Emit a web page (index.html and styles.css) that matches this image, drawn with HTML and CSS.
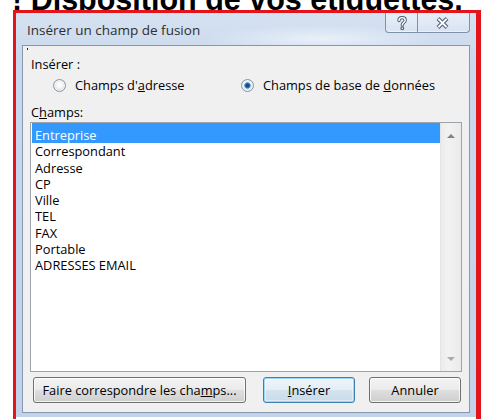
FILE: index.html
```html
<!DOCTYPE html>
<html lang="fr">
<head>
<meta charset="utf-8">
<title>Insérer un champ de fusion</title>
<link rel="stylesheet" href="styles.css">
</head>
<body>
<h1 class="page-title"><span class="page-title-text">! Disposition de vos étiquettes.</span></h1>
<div class="highlight-frame">
  <div class="window">
    <div class="titlebar">
      <span class="caption">Insérer un champ de fusion</span>
      <div class="caption-buttons">
        <span class="cap-btn cap-help">
          <svg width="10" height="15" viewBox="0 0 10 15">
            <g fill="none" stroke-linecap="round">
              <path d="M2 4.6 C2 2.6 3.4 1.6 5.1 1.6 C7 1.6 8.2 2.7 8.2 4.3 C8.2 6.4 5.3 6.6 5.3 9" stroke="#56667c" stroke-width="3.4"/>
              <circle cx="5.3" cy="12.3" r="1.3" fill="#56667c" stroke="#56667c" stroke-width="1.4"/>
              <path d="M2 4.6 C2 2.6 3.4 1.6 5.1 1.6 C7 1.6 8.2 2.7 8.2 4.3 C8.2 6.4 5.3 6.6 5.3 9" stroke="#fff" stroke-width="1.4"/>
              <circle cx="5.3" cy="12.3" r="0.8" fill="#fff"/>
            </g>
          </svg>
        </span>
        <span class="cap-btn cap-close">
          <svg width="13" height="12" viewBox="0 0 13 12">
            <path d="M2 1.5 L11 10.5 M11 1.5 L2 10.5" fill="none" stroke="#56667c" stroke-width="4"/>
            <path d="M2.4 1.9 L10.6 10.1 M10.6 1.9 L2.4 10.1" fill="none" stroke="#fff" stroke-width="2"/>
          </svg>
        </span>
      </div>
    </div>
    <div class="client">
      <span class="stray-dot"></span>
      <div class="label">Insérer :</div>
      <div class="radio-row">
        <label class="radio radio-first"><span class="radio-mark"></span><span class="radio-text">Champs d'<u>a</u>dresse</span></label>
        <label class="radio"><span class="radio-mark checked"></span><span class="radio-text">Champs de base de <u>d</u>onnées</span></label>
      </div>
      <div class="label fields-label">C<u>h</u>amps:</div>
      <div class="listbox">
        <ul class="items">
          <li class="item selected">Entreprise</li>
          <li class="item">Correspondant</li>
          <li class="item">Adresse</li>
          <li class="item">CP</li>
          <li class="item">Ville</li>
          <li class="item">TEL</li>
          <li class="item">FAX</li>
          <li class="item">Portable</li>
          <li class="item">ADRESSES EMAIL</li>
        </ul>
        <div class="scrollbar">
          <span class="arrow arrow-up"></span>
          <span class="arrow arrow-down"></span>
        </div>
      </div>
      <div class="button-row">
        <button class="btn btn-map">Faire correspondre les cha<u>m</u>ps...</button>
        <button class="btn btn-insert btn-default"><u>I</u>nsérer</button>
        <button class="btn btn-cancel">Annuler</button>
      </div>
    </div>
  </div>
</div>
</body>
</html>
```
FILE: styles.css
```css
* {
  box-sizing: border-box;
}

html,
body {
  margin: 0;
  padding: 0;
  background: #fff;
}

body {
  width: 481px;
  height: 419px;
  overflow: hidden;
  font-family: "Open Sans", "Noto Sans", sans-serif;
}

/* Page heading, mostly hidden behind the dialog */
.page-title {
  margin: 0;
  height: 10px;
  overflow: hidden;
  font: bold 30.5px/35px "Liberation Sans", Arial, sans-serif;
  color: #000;
  white-space: nowrap;
}

.page-title-text {
  display: block;
  margin-top: -18px;
  padding-left: 12px;
}

/* Red outline drawn around the dialog */
.highlight-frame {
  margin-left: 13px;
  width: 468px;
  height: 409px;
  border: 3px solid #e3141c;
  border-right-width: 5px;
  border-bottom: 0;
}

/* Aero-style dialog window */
.window {
  height: 404px;
  display: flex;
  flex-direction: column;
  padding: 0 6px 4px 6px;
  background: linear-gradient(to bottom, #d6e2f1 0%, #c9d8ed 12%, #c2d2ea 100%);
}

.titlebar {
  height: 32px;
  flex: none;
  display: flex;
  align-items: flex-start;
  background: radial-gradient(ellipse 120px 14px at 300px 26px, rgba(235, 242, 250, 0.9), rgba(235, 242, 250, 0) 100%);
}

.caption {
  margin-top: 9px;
  padding-left: 5px;
  font-size: 13.5px;
  line-height: 16px;
  color: #2e2e2e;
  white-space: nowrap;
}

.caption-buttons {
  margin-left: auto;
  display: flex;
  height: 20px;
  border: 1px solid #7f90a8;
  border-top: 0;
  border-radius: 0 0 4px 4px;
  background: linear-gradient(to bottom, rgba(255, 255, 255, 0.45), rgba(255, 255, 255, 0.15));
  box-shadow: inset 0 -1px 0 rgba(255, 255, 255, 0.5);
}

.cap-btn {
  display: flex;
  align-items: center;
  justify-content: center;
  height: 100%;
}

.cap-help {
  width: 32px;
  border-right: 1px solid #7f90a8;
  padding-top: 1px;
}

.cap-close {
  width: 51px;
  padding-right: 2px;
}

/* Client area */
.client {
  position: relative;
  height: 368px;
  flex: none;
  display: flex;
  flex-direction: column;
  border: 1px solid #8797ae;
  background: #f0f0f0;
  padding: 10px 7px 0 7px;
  font-size: 12.8px;
  color: #000;
}

.stray-dot {
  position: absolute;
  left: 4px;
  top: 2px;
  width: 1px;
  height: 2px;
  background: #222;
}

.label {
  line-height: 16px;
  height: 16px;
  padding-left: 1px;
}

.fields-label {
  margin-top: 11px;
}

.radio-row {
  margin-top: 5px;
  height: 16px;
  display: flex;
  align-items: center;
  line-height: 16px;
}

.radio {
  display: flex;
  align-items: center;
  gap: 9px;
  white-space: nowrap;
}

.radio-first {
  margin-left: 23px;
  width: 188px;
  flex: none;
}

.radio-mark {
  width: 13px;
  height: 13px;
  flex: none;
  border-radius: 50%;
  border: 1px solid #8d959c;
  background: radial-gradient(circle at 50% 45%, #fbfbfb 0 28%, #e3e3e3 60%, #c9cbcd 100%);
  box-shadow: inset 0 0 0 1px rgba(255, 255, 255, 0.6);
}

.radio-mark.checked {
  background:
    radial-gradient(circle at 50% 50%, #1a4b86 0 18%, #3d7fc4 32%, #7fb6e6 40%, rgba(255, 255, 255, 0) 44%),
    radial-gradient(circle at 50% 45%, #fbfbfb 0 28%, #e3e3e3 60%, #c9cbcd 100%);
}

/* List of merge fields */
.listbox {
  margin-top: 2px;
  height: 250px;
  flex: none;
  display: flex;
  border: 1px solid #9ea4ab;
  background: #fff;
}

.items {
  flex: 1;
  margin: 0;
  padding: 0;
  list-style: none;
}

.item {
  line-height: 16.25px;
  padding-left: 4px;
  white-space: nowrap;
}

.item.selected {
  padding-top: 4px;
  margin-left: 1px;
  padding-left: 3px;
  background: #3399ff;
  color: #fff;
}

.scrollbar {
  width: 21px;
  flex: none;
  display: flex;
  flex-direction: column;
  justify-content: space-between;
  align-items: center;
  padding: 11px 0 10px 0;
  border-left: 1px solid #e4e4e4;
  background: linear-gradient(to right, #ececec, #f2f2f2 40%, #eaeaea);
}

.arrow {
  width: 0;
  height: 0;
  border-left: 4px solid transparent;
  border-right: 4px solid transparent;
}

.arrow-up {
  border-bottom: 4px solid #77868a;
}

.arrow-down {
  border-top: 4px solid #a3acae;
}

/* Dialog buttons */
.button-row {
  margin-top: 5px;
  display: flex;
  height: 26px;
}

.btn {
  height: 26px;
  padding: 0;
  border: 1px solid #707070;
  border-radius: 3px;
  background: linear-gradient(to bottom, #f3f3f3 0%, #ebebeb 48%, #dedede 52%, #cfcfcf 100%);
  box-shadow: inset 0 0 0 1px rgba(255, 255, 255, 0.75);
  font-family: "Open Sans", "Noto Sans", sans-serif;
  font-size: 12.8px;
  color: #000;
  line-height: 16px;
  white-space: nowrap;
}

.btn-map {
  width: 213px;
  margin-left: 3px;
}

.btn-insert {
  width: 92px;
  margin-left: 17px;
}

.btn-cancel {
  width: 92px;
  margin-left: 14px;
}

.btn-default {
  border-color: #3c7fb1;
  background: linear-gradient(to bottom, #eef5fa 0%, #e4eef6 48%, #d4e3ef 52%, #c8dae9 100%);
  box-shadow: inset 0 0 0 1px #9fd8f5, inset 0 0 0 2px rgba(255, 255, 255, 0.4);
}
```
